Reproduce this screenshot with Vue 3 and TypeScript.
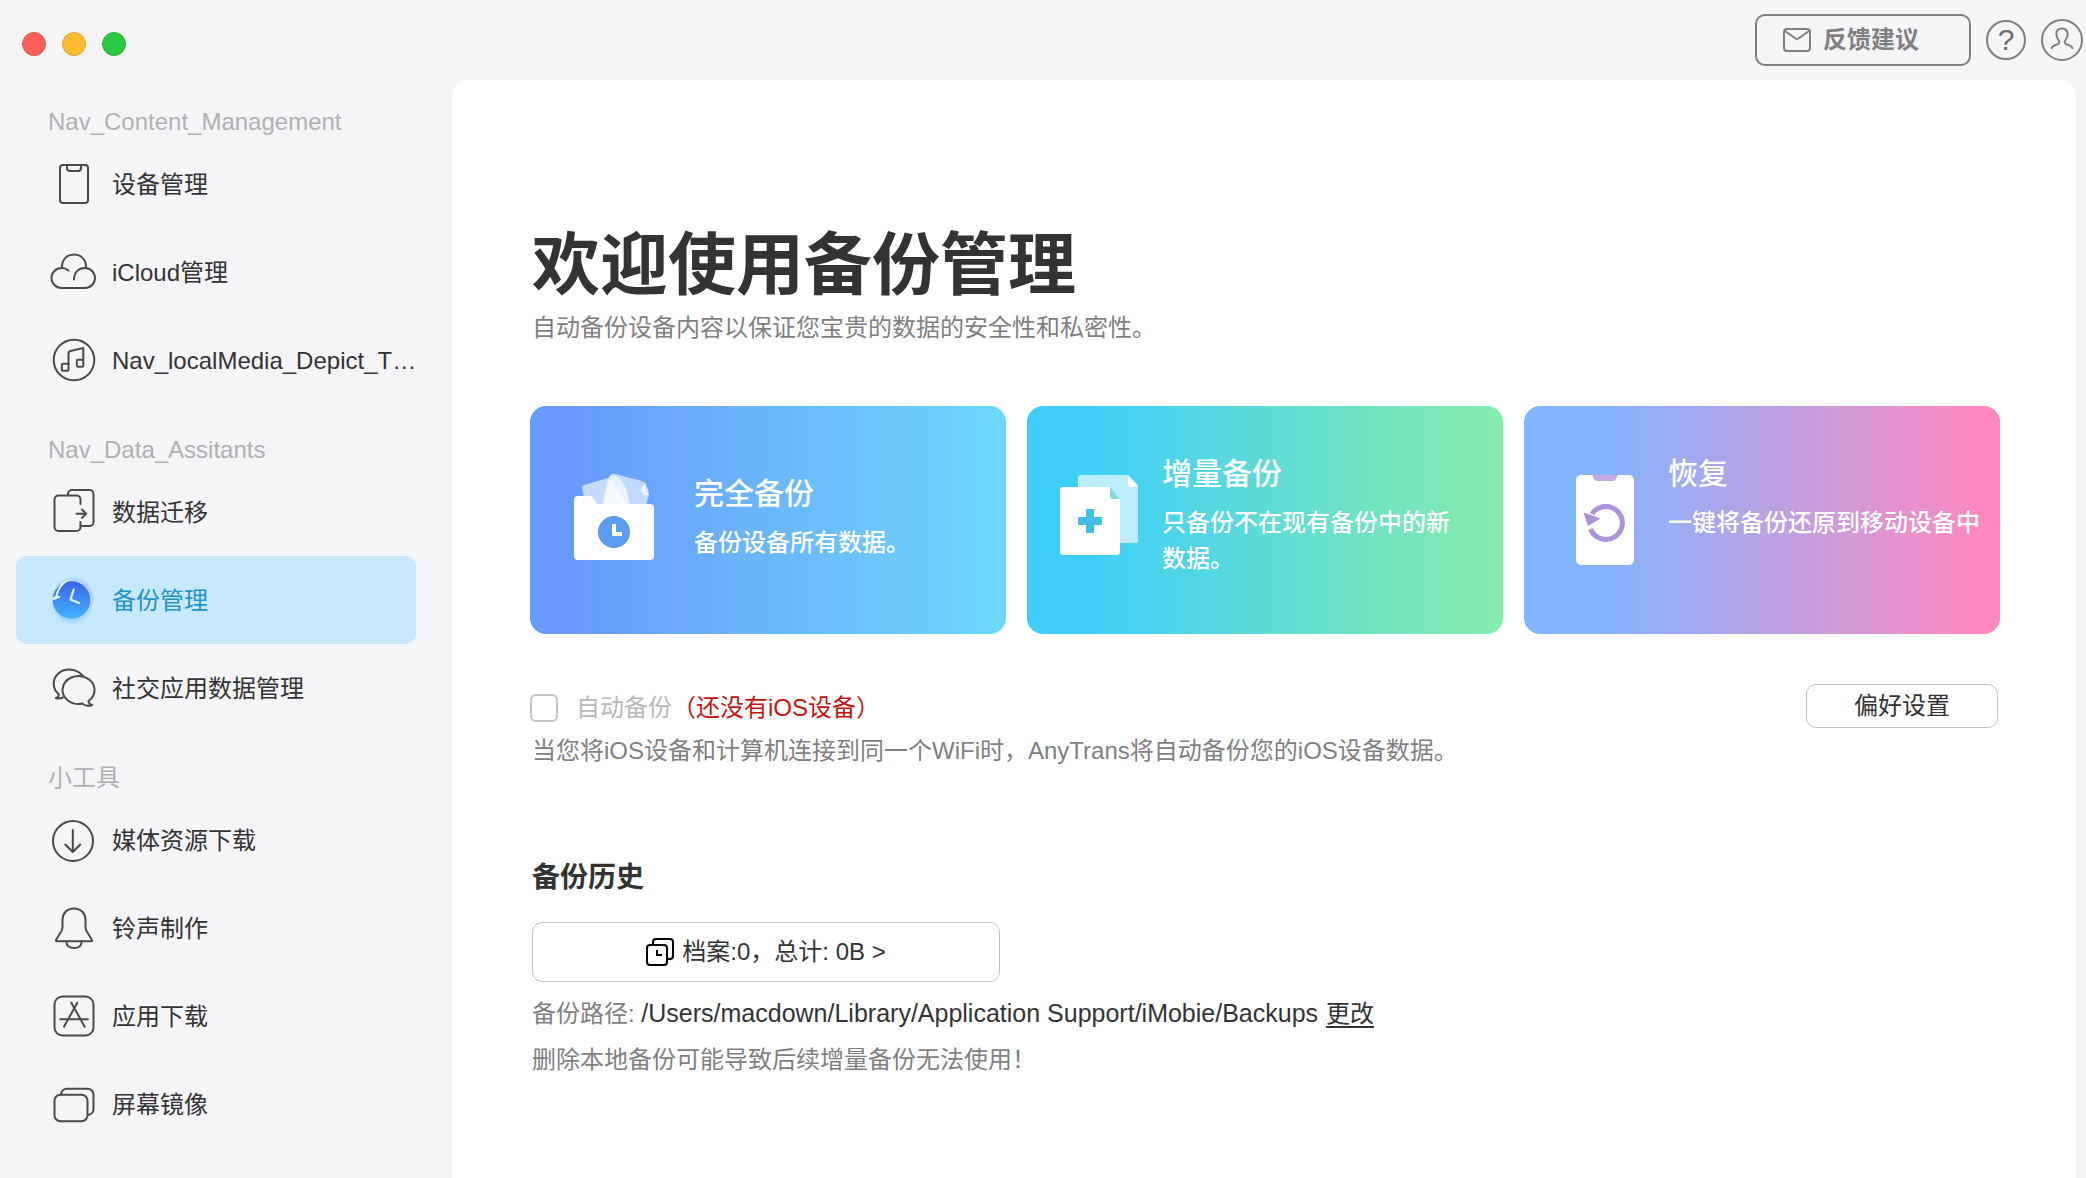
<script setup lang="ts">
import { ref } from 'vue'

interface NavItem {
  id: string
  label: string
  paths: string[]
}

interface NavGroup {
  title: string
  items: NavItem[]
}

const groups: NavGroup[] = [
  {
    title: 'Nav_Content_Management',
    items: [
      {
        id: 'device',
        label: '设备管理',
        paths: [
          'M13 5H35a3 3 0 0 1 3 3V40a3 3 0 0 1-3 3H13a3 3 0 0 1-3-3V8a3 3 0 0 1 3-3Z',
          'M17 5v3a3 3 0 0 0 3 3h8a3 3 0 0 0 3-3V5',
        ],
      },
      {
        id: 'icloud',
        label: 'iCloud管理',
        paths: [
          'M18.500 22.500A10 10 0 0 0 11.500 20A10 10 0 0 0 11.500 40H35A10 10 0 0 0 35 20C28.500 20 24 24.500 24 31.500',
          'M12 20C11.500 11.500 17 6.500 24 6.500S36.500 11.500 36 20',
        ],
      },
      {
        id: 'media',
        label: 'Nav_localMedia_Depict_T…',
        paths: [
          'M24 3.700a20.300 20.300 0 1 1 0 40.600a20.300 20.300 0 1 1 0-40.600Z',
          'M18.500 28V17.500Q18.500 15.500 20.500 15L33.300 12V29.500a1.200 1.200 0 0 1-1.200 1.200H28a1.200 1.200 0 0 1-1.200-1.200V25a1.200 1.200 0 0 1 1.200-1.200H33.300',
          'M18.500 27.500V33.500a1.200 1.200 0 0 1-1.200 1.200H13a1.200 1.200 0 0 1-1.200-1.200V29a1.200 1.200 0 0 1 1.200-1.200H18.500',
        ],
      },
    ],
  },
  {
    title: 'Nav_Data_Assitants',
    items: [
      {
        id: 'transfer',
        label: '数据迁移',
        paths: [
          'M18 7V6a4 4 0 0 1 4-4H39.500a4 4 0 0 1 4 4V34a4 4 0 0 1-4 4H30.500',
          'M30.500 16V11.500a4 4 0 0 0-4-4H8.500a4 4 0 0 0-4 4V39a4 4 0 0 0 4 4H26.500a4 4 0 0 0 4-4V34',
          'M26.500 25.700H36M32 21.500L36.200 25.700L32 29.900',
        ],
      },
      { id: 'backup', label: '备份管理', paths: [] },
      {
        id: 'social',
        label: '社交应用数据管理',
        paths: [
          'M32.500 39.600A16 14 0 1 1 38.500 37C38.500 39 40 40.500 42.300 41C38.500 42.300 34.500 41.500 32.500 39.600Z',
          'M33 12C29 7.500 24.500 5.500 19.500 5.500C10 5.500 3.700 12 3.700 19.500C3.700 24 5.500 27.500 8.500 30C9.500 32 8 33.200 5.800 34C8 34.800 11 34.500 13 33.300',
        ],
      },
    ],
  },
  {
    title: '小工具',
    items: [
      {
        id: 'download',
        label: '媒体资源下载',
        paths: [
          'M23 5a20 20 0 1 1 0 40a20 20 0 1 1 0-40Z',
          'M22.800 14V36M15.300 28.500L22.800 36L30.300 28.500',
        ],
      },
      {
        id: 'ringtone',
        label: '铃声制作',
        paths: [
          'M24 4.500C17 4.500 12.500 9.500 12.500 16V22.500C12.500 24.500 12.300 25.500 11.500 27L6 36Q5.500 37.300 7 37.300H41Q42.500 37.300 42 36L36.500 27C35.700 25.500 35.500 24.500 35.500 22.500V16C35.500 9.500 31 4.500 24 4.500Z',
          'M16.300 37.500C16.500 41.500 19.500 44 24 44S31.500 41.500 31.700 37.500',
        ],
      },
      {
        id: 'apps',
        label: '应用下载',
        paths: [
          'M12.500 4.500H35.500a8 8 0 0 1 8 8V35.500a8 8 0 0 1-8 8H12.500a8 8 0 0 1-8-8V12.500a8 8 0 0 1 8-8Z',
          'M27.300 10.700L14 34.700M21.300 10.700L34.700 34.700M10.300 27.300H38',
        ],
      },
      {
        id: 'mirror',
        label: '屏幕镜像',
        paths: [
          'M10.500 14.700H31.500a6 6 0 0 1 6 6V35.300a6 6 0 0 1-6 6H10.500a6 6 0 0 1-6-6V20.700a6 6 0 0 1 6-6Z',
          'M11 14.500a6 6 0 0 1 6-5.800H37.500a6 6 0 0 1 6 6V29a6 6 0 0 1-5.500 6',
        ],
      },
    ],
  },
]

const active = ref('backup')
const autoBackup = ref(false)
</script>

<template>
  <div class="window" lang="zh-CN">
    <aside class="sidebar">
      <div class="lights">
        <button class="light close" type="button" aria-label="关闭"></button>
        <button class="light minimize" type="button" aria-label="最小化"></button>
        <button class="light zoom" type="button" aria-label="缩放"></button>
      </div>
      <nav>
        <section v-for="group in groups" :key="group.title">
          <h2 class="group-title">{{ group.title }}</h2>
          <button
            v-for="item in group.items"
            :key="item.id"
            type="button"
            class="nav-item"
            :class="{ active: item.id === active }"
            @click="active = item.id"
          >
            <svg v-if="item.id === 'backup'" class="nav-icon" viewBox="0 0 48 48" aria-hidden="true">
              <defs>
                <linearGradient id="clockFill" x1="0" y1="0" x2="0" y2="1">
                  <stop offset="0" stop-color="#3a66e6" />
                  <stop offset="0.5" stop-color="#3e8bf4" />
                  <stop offset="1" stop-color="#43b4ff" />
                </linearGradient>
                <filter id="clockGlow" x="-30%" y="-30%" width="160%" height="170%">
                  <feGaussianBlur stdDeviation="2.5" />
                </filter>
              </defs>
              <circle cx="22" cy="28" r="18" fill="#7cc4fb" opacity="0.7" filter="url(#clockGlow)" />
              <circle cx="23" cy="22" r="20.500" fill="#b3d3fb" />
              <circle cx="21.500" cy="24" r="18.800" fill="url(#clockFill)" />
              <path d="M1 23L5.500 20C7 11 13 4 22 3C14 6.500 9.500 12 7.500 19.500L11 21L4.500 24Z" fill="#eaf5ff" />
              <path d="M23.700 13.500L20.500 23.500L29 27" fill="none" stroke="#dff3ff" stroke-width="2.200" stroke-linecap="round" stroke-linejoin="round" />
            </svg>
            <svg v-else class="nav-icon line" viewBox="0 0 48 48" aria-hidden="true">
              <path v-for="(d, i) in item.paths" :key="i" :d="d" />
            </svg>
            <span class="nav-label">{{ item.label }}</span>
          </button>
        </section>
      </nav>
    </aside>

    <div class="content">
      <header class="toolbar">
        <button type="button" class="feedback">
          <svg class="mail" viewBox="0 0 28 24" aria-hidden="true">
            <rect x="1" y="1" width="26" height="22" rx="3" />
            <path d="M2 3L12.500 10.500Q14 11.500 15.500 10.500L26 3" />
          </svg>
          <span>反馈建议</span>
        </button>
        <button type="button" class="round help" aria-label="帮助">?</button>
        <button type="button" class="round user" aria-label="账户">
          <svg class="person" viewBox="0 0 42 42" aria-hidden="true">
            <path d="M10.500 30C10.500 27.500 12.500 26.500 16 25.500C18.500 24.800 18.800 23 17.500 21C16 19 15.300 17 15.300 15C15.300 11.500 17.500 9.500 21 9.500S26.700 11.500 26.700 15C26.700 17 26 19 24.500 21C23.200 23 23.500 24.800 26 25.500C29.500 26.500 31.500 27.500 31.500 30" />
          </svg>
        </button>
      </header>

      <main class="panel">
        <div class="intro">
          <h1 class="title">欢迎使用备份管理</h1>
          <p class="subtitle">自动备份设备内容以保证您宝贵的数据的安全性和私密性。</p>
        </div>

        <div class="cards">
          <button type="button" class="card full">
            <svg class="card-icon" viewBox="0 0 80 88" aria-hidden="true">
              <path d="M8 16Q7.500 13 10 12L34 5L54 32H12Z" fill="#fff" opacity="0.62" />
              <path d="M36 3Q37 0 41 1L68 8Q71 9 71 13V17L75 22L72 32H30Z" fill="#fff" opacity="0.6" />
              <path d="M28 32L34 6Q35 2 40 2L47 7L52 15L56 32Z" fill="#fff" opacity="0.65" />
              <path d="M71 9L75 20Q75 23 71 22Q67 19 67 17Z" fill="#fff" opacity="0.75" />
              <path d="M0 27a4 4 0 0 1 4-4H16Q19 23 20 26L23 31H76a4 4 0 0 1 4 4V83a4 4 0 0 1-4 4H4a4 4 0 0 1-4-4Z" fill="#fff" />
              <circle cx="40" cy="59" r="16" fill="#5a9ced" />
              <path d="M38 51H42V59H48V63H38Z" fill="#fff" />
            </svg>
            <span class="card-text">
              <span class="card-title">完全备份</span>
              <span class="card-desc">备份设备所有数据。</span>
            </span>
          </button>

          <button type="button" class="card incremental">
            <svg class="card-icon" viewBox="0 0 78 88" aria-hidden="true">
              <path d="M18 5a3 3 0 0 1 3-3H68L78 12V67a3 3 0 0 1-3 3H18Z" fill="#bcedfa" />
              <path d="M68 2L78 14H71a3 3 0 0 1-3-3Z" fill="#fff" />
              <path d="M0 17a3 3 0 0 1 3-3H50L60 26V79a3 3 0 0 1-3 3H3a3 3 0 0 1-3-3Z" fill="#fff" />
              <path d="M50 14L60 26H53a3 3 0 0 1-3-3Z" fill="#84d8dc" />
              <path d="M27 36H33a1 1 0 0 1 1 1V44H41a1 1 0 0 1 1 1V51a1 1 0 0 1-1 1H34V59a1 1 0 0 1-1 1H27a1 1 0 0 1-1-1V52H19a1 1 0 0 1-1-1V45a1 1 0 0 1 1-1H26V37a1 1 0 0 1 1-1Z" fill="#40bfe8" />
            </svg>
            <span class="card-text">
              <span class="card-title">增量备份</span>
              <span class="card-desc">只备份不在现有备份中的新数据。</span>
            </span>
          </button>

          <button type="button" class="card restore">
            <svg class="card-icon" viewBox="0 0 58 92" aria-hidden="true">
              <rect x="0" y="2" width="58" height="90" rx="5" fill="#fff" />
              <path d="M16 2H42C40.500 3 40.500 8 37 8H21C17.500 8 17.500 3 16 2Z" fill="#c2a8e4" />
              <path d="M14.500 56A16.500 16.500 0 1 0 16 41" fill="none" stroke="#ab92d9" stroke-width="5" />
              <path d="M7.500 39.500L24.500 45.500L12 53Z" fill="#ab92d9" />
            </svg>
            <span class="card-text">
              <span class="card-title">恢复</span>
              <span class="card-desc">一键将备份还原到移动设备中</span>
            </span>
          </button>
        </div>

        <div class="auto">
          <div class="auto-info">
            <div class="auto-row">
              <input id="auto-backup" v-model="autoBackup" type="checkbox" class="check" />
              <label for="auto-backup" class="auto-label">自动备份<span class="warn">（还没有iOS设备）</span></label>
            </div>
            <p class="note">当您将iOS设备和计算机连接到同一个WiFi时，AnyTrans将自动备份您的iOS设备数据。</p>
          </div>
          <button type="button" class="prefs">偏好设置</button>
        </div>

        <section class="history">
          <h2 class="history-title">备份历史</h2>
          <button type="button" class="archive">
            <svg class="archive-icon" viewBox="0 0 28 28" aria-hidden="true">
              <rect x="1" y="7" width="20" height="20" rx="3" />
              <path d="M7 6V4a3 3 0 0 1 3-3H24a3 3 0 0 1 3 3V18a3 3 0 0 1-3 3H22" />
              <path d="M11 12V17H16" />
            </svg>
            <span>档案:0，总计: 0B &gt;</span>
          </button>
          <p class="note path">备份路径: <span class="path-value">/Users/macdown/Library/Application Support/iMobie/Backups</span><a href="#" class="change">更改</a></p>
          <p class="note caution">删除本地备份可能导致后续增量备份无法使用！</p>
        </section>
      </main>
    </div>
  </div>
</template>

<style>
body {
  background: #f5f5f8;
}
</style>

<style scoped>
.window {
  display: flex;
  min-height: 100vh;
  background: #f5f5f8;
  color: #333;
  font-family: 'Liberation Sans', 'Noto Sans CJK SC', sans-serif;
  font-size: 24px;
  line-height: 36px;
}

button {
  margin: 0;
  padding: 0;
  border: 0;
  background: none;
  color: inherit;
  font: inherit;
  cursor: pointer;
}

h1,
h2,
p {
  margin: 0;
}

svg {
  display: block;
  flex: none;
}

.sidebar {
  flex: none;
  box-sizing: border-box;
  width: 452px;
  padding: 32px 36px 28px 16px;
}

.lights {
  display: flex;
  gap: 16px;
  padding: 0 6px 20px;
}

.light {
  box-sizing: border-box;
  width: 24px;
  height: 24px;
  border: 1px solid;
  border-radius: 50%;
}

.close {
  background: #fe5f58;
  border-color: #dd544d;
}

.minimize {
  background: #febc2e;
  border-color: #dea236;
}

.zoom {
  background: #29c940;
  border-color: #2eab3e;
}

.group-title {
  height: 36px;
  padding: 28px 32px 0;
  color: #b0b0b3;
  font-size: 24px;
  font-weight: 400;
}

.nav-item {
  display: flex;
  align-items: center;
  gap: 14px;
  width: 100%;
  height: 88px;
  padding: 0 0 0 34px;
  border-radius: 10px;
  text-align: left;
}

.nav-item.active {
  background: #c8e9fc;
  color: #1f93cb;
}

.nav-icon {
  width: 48px;
  height: 48px;
  overflow: visible;
}

.nav-icon.line {
  fill: none;
  stroke: #4a4a4c;
  stroke-width: 2;
  stroke-linecap: round;
  stroke-linejoin: round;
}

.nav-label {
  padding-top: 2px;
  white-space: nowrap;
}

.content {
  display: flex;
  flex: 1;
  flex-direction: column;
  min-width: 0;
}

.toolbar {
  display: flex;
  align-items: center;
  justify-content: flex-end;
  gap: 15px;
  height: 80px;
  padding-right: 3px;
}

.feedback {
  display: flex;
  align-items: center;
  gap: 12px;
  box-sizing: border-box;
  width: 216px;
  height: 52px;
  padding-left: 26px;
  border: 2px solid #7f7f82;
  border-radius: 10px;
  color: #7f7f82;
  font-weight: 700;
}

.mail {
  width: 28px;
  height: 24px;
}

.mail,
.person {
  fill: none;
  stroke: #7f7f82;
  stroke-width: 2;
}

.round {
  display: flex;
  align-items: center;
  justify-content: center;
  box-sizing: border-box;
  border: 2px solid #7f7f82;
  border-radius: 50%;
}

.help {
  width: 40px;
  height: 40px;
  color: #6a6a6c;
  font-size: 30px;
}

.user {
  width: 42px;
  height: 42px;
}

.person {
  width: 42px;
  height: 42px;
}

.panel {
  flex: 1;
  margin-right: 10px;
  padding: 144px 76px 40px 78px;
  border-radius: 16px 16px 0 0;
  background: #fff;
}

.intro {
  padding: 0 2px 60px;
}

.title {
  font-size: 68px;
  font-weight: 700;
  line-height: 82px;
}

.subtitle {
  padding-top: 4px;
  color: #7f7f7f;
}

.cards {
  display: grid;
  grid-template-columns: repeat(3, 1fr);
  gap: 21px;
}

.card {
  display: flex;
  align-items: flex-start;
  box-sizing: border-box;
  min-height: 228px;
  border-radius: 16px;
  color: #fff;
  text-align: left;
}

.full {
  gap: 40px;
  padding: 67px 20px 20px 44px;
  background: linear-gradient(90deg, #699bfc 10%, #6dd9fa 100%);
}

.incremental {
  gap: 24px;
  padding: 47px 40px 20px 33px;
  background: linear-gradient(90deg, #3ecef9 12%, #87eda9 100%);
}

.restore {
  gap: 34px;
  padding: 47px 16px 20px 52px;
  background: linear-gradient(90deg, #83b5ff 16%, #ff88bf 97%);
}

.full .card-icon {
  width: 80px;
  height: 88px;
}

.incremental .card-icon {
  width: 78px;
  height: 88px;
  margin-top: 20px;
}

.restore .card-icon {
  width: 58px;
  height: 92px;
  margin-top: 20px;
}

.card-text {
  display: flex;
  flex-direction: column;
  gap: 10px;
}

.card-title {
  font-size: 30px;
  font-weight: 500;
  line-height: 42px;
}

.card-desc {
  font-weight: 500;
}

.auto {
  display: flex;
  align-items: flex-start;
  justify-content: space-between;
  padding-top: 50px;
}

.auto-info {
  padding-top: 6px;
}

.auto-row {
  display: flex;
  align-items: center;
  gap: 18px;
}

.check {
  appearance: none;
  box-sizing: border-box;
  width: 28px;
  height: 28px;
  margin: 0;
  border: 2px solid #c6c6c6;
  border-radius: 6px;
  background: #fff;
}

.check:checked {
  background: #3e8bf4;
}

.auto-label {
  color: #b8b8b8;
}

.warn {
  color: #c9120c;
}

.note {
  color: #7f7f7f;
}

.auto .note {
  padding: 7px 2px 0;
}

.prefs {
  box-sizing: border-box;
  width: 192px;
  height: 44px;
  margin-right: 2px;
  border: 1px solid #c4c4c4;
  border-radius: 10px;
  background: #fff;
}

.history {
  padding: 89px 2px 0;
}

.history-title {
  font-size: 28px;
  font-weight: 700;
  line-height: 40px;
}

.archive {
  display: flex;
  align-items: center;
  justify-content: center;
  gap: 8px;
  box-sizing: border-box;
  width: 468px;
  height: 60px;
  margin-top: 24px;
  border: 1px solid #c4c4c4;
  border-radius: 10px;
  background: #fff;
}

.archive-icon {
  width: 28px;
  height: 28px;
  fill: none;
  stroke: #000;
  stroke-width: 2;
}

.path {
  padding-top: 13px;
}

.path-value {
  color: #333;
  font-size: 25px;
}

.change {
  margin-left: 8px;
  color: #333;
  text-decoration: underline;
  text-underline-offset: 4px;
}

.caution {
  padding-top: 10px;
}
</style>
